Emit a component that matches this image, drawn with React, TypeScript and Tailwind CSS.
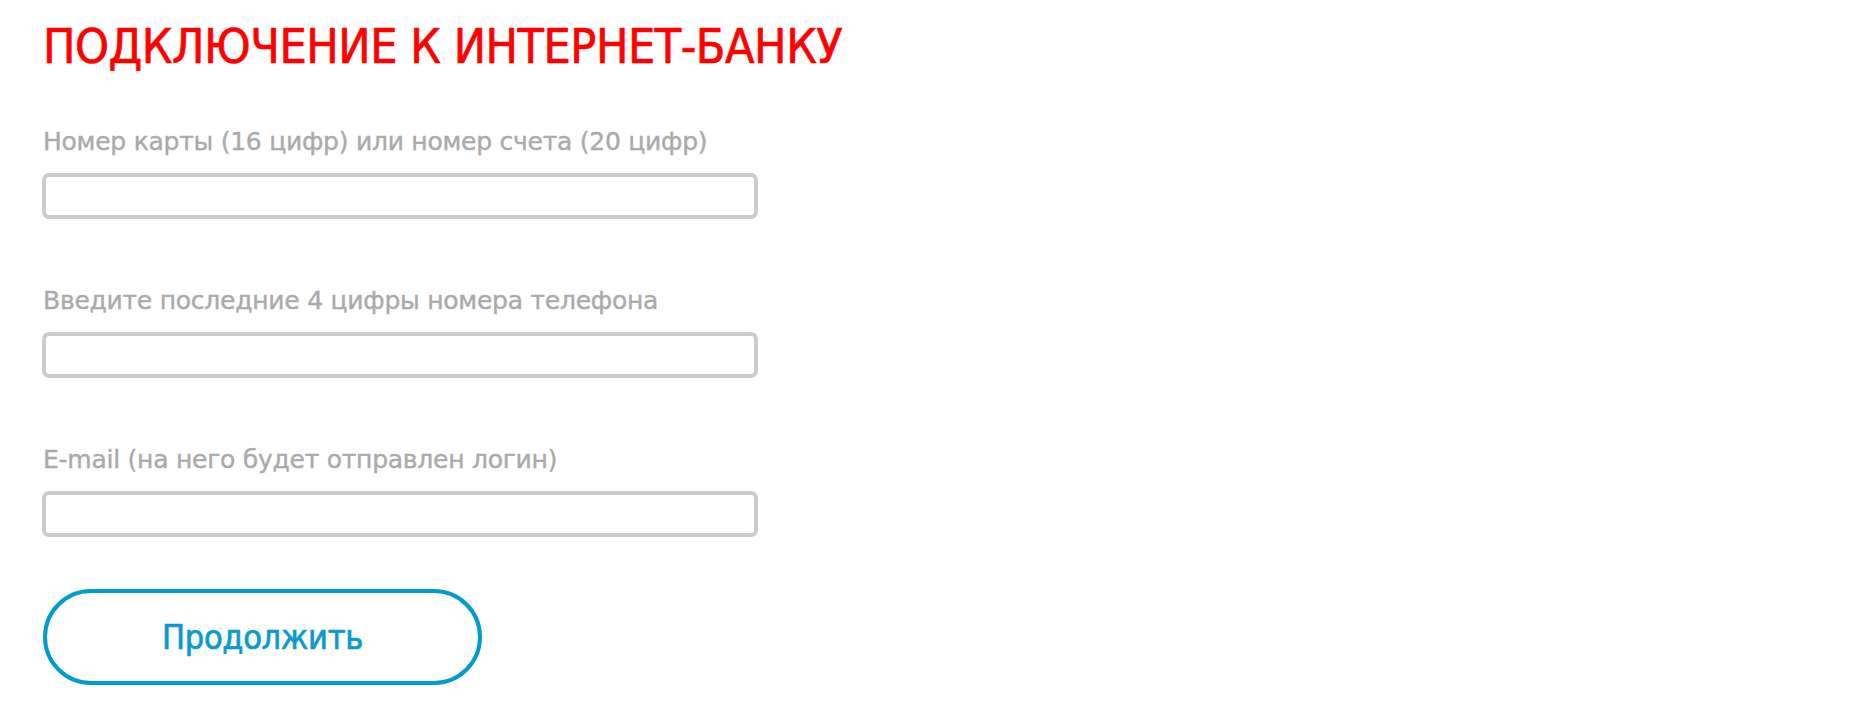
const fieldLabels = [
  "Номер карты (16 цифр) или номер счета (20 цифр)",
  "Введите последние 4 цифры номера телефона",
  "E-mail (на него будет отправлен логин)",
];

export default function App() {
  return (
    <div
      className="min-h-screen bg-white pl-[43px] pt-[22px]"
      style={{ fontFamily: '"DejaVu Sans Condensed", "DejaVu Sans", sans-serif' }}
    >
      <h1 className="text-[48px] leading-[48px] tracking-[-0.45px] text-[#ff0000] [-webkit-text-stroke:0.7px_#ff0000]">
        ПОДКЛЮЧЕНИЕ К ИНТЕРНЕТ-БАНКУ
      </h1>

      <form className="mt-[60px] flex flex-col">
        {fieldLabels.map((label, i) => (
          <div key={i} className={i > 0 ? "mt-[70px]" : ""}>
            <label className="block font-['DejaVu_Sans',sans-serif] text-[25px] leading-[24px] tracking-[-0.25px] text-[#aaaaaa] [-webkit-text-stroke:0.4px_#aaaaaa]">
              {label}
            </label>
            <input
              type="text"
              className="mt-[19px] ml-[-1px] block h-[46px] w-[716px] rounded-[7px] border-[4px] border-solid border-[#cccccc] bg-white outline-none"
            />
          </div>
        ))}

        <button
          type="button"
          className="mt-[52px] h-[96px] w-[439px] rounded-full border-[4px] border-solid border-[#009ccf] bg-white text-[34px] tracking-[-0.3px] text-[#0a9ad0] [-webkit-text-stroke:0.7px_#0a9ad0]"
        >
          Продолжить
        </button>
      </form>
    </div>
  );
}
